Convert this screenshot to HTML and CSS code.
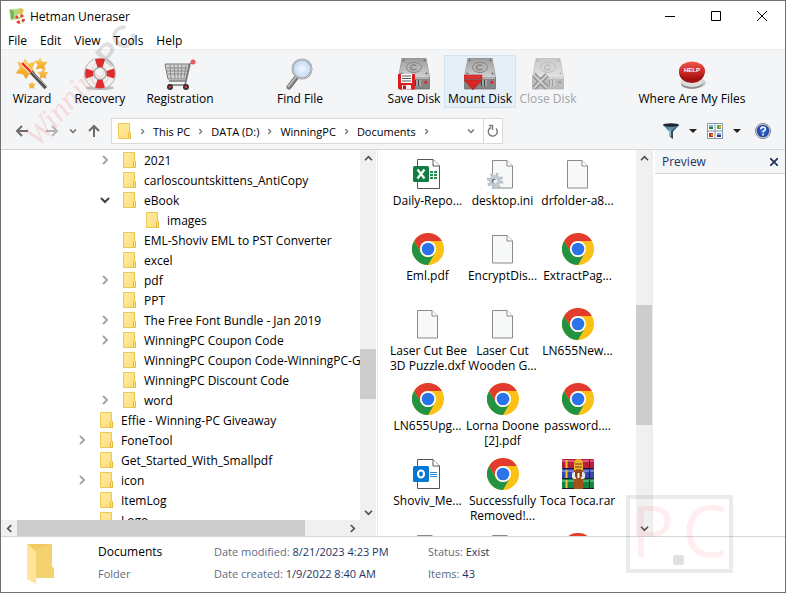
FILE: index.html
```html
<!DOCTYPE html>
<html lang="en">
  <head>
    <meta charset="UTF-8" />
    <meta name="viewport" content="width=device-width, initial-scale=1.0" />
    <title>Hetman Uneraser</title>
    <link rel="stylesheet" href="styles.css">
  </head>
  <body>
    <!-- Shared icons -->
    <svg class="sprite" aria-hidden="true">
      <defs>
        <linearGradient id="g-folder" x1="0" y1="0" x2="1" y2="1">
          <stop offset="0" stop-color="#ffeaa4" />
          <stop offset="1" stop-color="#fbde7a" />
        </linearGradient>
        <linearGradient id="g-metal" x1="0" y1="0" x2="0" y2="1">
          <stop offset="0" stop-color="#9b9b9b" />
          <stop offset="1" stop-color="#d2d2d2" />
        </linearGradient>
        <linearGradient id="g-star" x1="0" y1="0" x2="0" y2="1">
          <stop offset="0" stop-color="#ffd84a" />
          <stop offset="1" stop-color="#f59a1b" />
        </linearGradient>
        <linearGradient id="g-red" x1="0" y1="0" x2="0" y2="1">
          <stop offset="0" stop-color="#f4554b" />
          <stop offset="1" stop-color="#a80d0d" />
        </linearGradient>
        <radialGradient id="g-help">
          <stop offset="0" stop-color="#3f7ae0" />
          <stop offset="1" stop-color="#1a3f9c" />
        </radialGradient>
        <radialGradient id="g-lens">
          <stop offset="0" stop-color="#f1f8ff" />
          <stop offset="1" stop-color="#bcd8f6" />
        </radialGradient>
      </defs>

      <symbol id="folder" viewBox="0 0 14 16">
        <path d="M.5 .5H11.500V15.500H.5Z" fill="url(#g-folder)" stroke="#ecc955" />
        <path d="M11.500 9.500h1v6h-2v-5z" fill="#ffe795" stroke="#e2b93c" />
      </symbol>
      <symbol id="chev-right" viewBox="0 0 8 10">
        <path d="M2 1l4 4-4 4" fill="none" stroke="currentColor" stroke-width="2" />
      </symbol>
      <symbol id="chev-down" viewBox="0 0 10 8">
        <path d="M1 2l4 4 4-4" fill="none" stroke="currentColor" stroke-width="2" />
      </symbol>
      <symbol id="arrow" viewBox="0 0 14 12">
        <path d="M13 6H2M7 1L2 6l5 5" fill="none" stroke="currentColor" stroke-width="2" />
      </symbol>
      <symbol id="drop" viewBox="0 0 8 4">
        <path d="M0 0h8L4 4z" fill="#222" />
      </symbol>

      <symbol id="disk" viewBox="0 0 32 32">
        <path d="M4 0h24l3.500 19.500H.5z" fill="url(#g-metal)" stroke="#8e8e8e" stroke-width=".7" />
        <path d="M.5 19.500h31V31H.5z" fill="#858585" stroke="#6c6c6c" stroke-width=".7" />
        <path d="M1 20h30" stroke="#e2e2e2" />
        <ellipse cx="16" cy="9.500" rx="7.500" ry="5" fill="#b4b4b4" stroke="#858585" />
        <path d="M18.500 7.500c-3-1.500-6 0-6 2s3 3 6 1.500" fill="none" stroke="#808080" stroke-width="1.300" />
        <g fill="#666"><circle cx="5.500" cy="2.500" r=".9" /><circle cx="26.500" cy="2.500" r=".9" /><circle cx="3.500" cy="15.500" r="1" /><circle cx="28.500" cy="15.500" r="1" /></g>
        <path d="M17.500 22v6M20.500 22v6" stroke="#444" stroke-width="1.300" />
        <path d="M19 22v6M22 22v6" stroke="#ccc" />
        <path d="M26.500 23h2.500v2.500h-2.500z" fill="#f01818" />
      </symbol>

      <symbol id="page" viewBox="0 0 32 32">
        <path d="M5.500 2.500H20l5.500 5.500v22h-20z" fill="#f7f8f8" stroke="#8a8a8a" />
        <path d="M20 2.500V8h5.500" fill="#fff" stroke="#8a8a8a" />
      </symbol>

      <symbol id="chrome" viewBox="0 0 48 48">
        <circle cx="24" cy="24" r="24" fill="#fbc116" />
        <path d="M3.200 12A24 24 0 0 1 44.800 12H24A12 12 0 0 0 13.600 30Z" fill="#e33b2e" />
        <path d="M3.200 12A24 24 0 0 0 24 48L34.400 30A12 12 0 0 1 13.600 30Z" fill="#229342" />
        <circle cx="24" cy="24" r="12" fill="#fff" />
        <circle cx="24" cy="24" r="9.500" fill="#2b73e8" />
      </symbol>

      <symbol id="excel" viewBox="0 0 32 32">
        <path d="M5.500 1.500H21L27.500 8v22.500h-22z" fill="#fff" stroke="#555" />
        <path d="M21 1.500V8h6.500" fill="#fff" stroke="#555" />
        <path d="M18 13h3v2h-3zm4 0h3v2h-3zm-4 3h3v2h-3zm4 0h3v2h-3zm-4 3h3v2h-3zm4 0h3v2h-3z" fill="#1f8a4c" />
        <rect x="1" y="8" width="16" height="16" rx="1.500" fill="#107c41" />
        <path d="M5.500 11.500l7 9M12.500 11.500l-7 9" stroke="#fff" stroke-width="2.200" />
      </symbol>

      <symbol id="outlook" viewBox="0 0 32 32">
        <path d="M5.500 1.500H21L27.500 8v22.500h-22z" fill="#fff" stroke="#555" />
        <path d="M21 1.500V8h6.500" fill="#fff" stroke="#555" />
        <path d="M18 14.500h7M18 16.500h7M18 18.500h7" stroke="#2a86d6" />
        <rect x="1" y="8" width="16" height="16" rx="1.500" fill="#0078d4" />
        <ellipse cx="9" cy="16" rx="3" ry="3.500" fill="none" stroke="#fff" stroke-width="2.200" />
      </symbol>

      <symbol id="ini" viewBox="0 0 32 32">
        <path d="M5.500 2.500H20l5.500 5.500v22h-20z" fill="#f7f8f8" stroke="#8a8a8a" />
        <path d="M20 2.500V8h5.500" fill="#fff" stroke="#8a8a8a" />
        <circle cx="8" cy="23" r="6.500" fill="none" stroke="#b4c0ca" stroke-width="3.500" stroke-dasharray="2.550 2.550" />
        <circle cx="8" cy="23" r="4.200" fill="#e8edf1" stroke="#c0cad2" stroke-width="3.500" />
        <circle cx="7" cy="23" r="2.200" fill="#66727c" />
        <circle cx="8" cy="23.500" r="1.800" fill="#f4f6f8" />
      </symbol>

      <symbol id="rar" viewBox="0 0 32 32">
        <rect y="1" width="32" height="10" rx="1" fill="#b81d3c" />
        <rect y="11" width="32" height="10" rx="1" fill="#3547a8" />
        <rect y="21" width="32" height="10" rx="1" fill="#168246" />
        <path d="M0 3h32" stroke="#e0577a" stroke-width="2" />
        <path d="M0 13h32" stroke="#6d83d8" stroke-width="2" />
        <path d="M0 23h32" stroke="#43b870" stroke-width="2" />
        <path d="M0 10.500h32M0 20.500h32M0 30.500h32" stroke="#201a38" />
        <path d="M4.500 2v8M4.500 12v8M4.500 22v8" stroke="#f0c43c" stroke-width="2" />
        <path d="M27.500 2v8M27.500 12v8M27.500 22v8" stroke="#222" />
        <path d="M12 31V5q0-4 4-4t5 4v26z" fill="#a4521a" />
        <path d="M12 12V6q0-5 4.500-5T21 6v6z" fill="#f2b234" />
        <path d="M13 6h7M13 9h7M14 12h5" stroke="#75400e" />
        <rect x="10" y="14" width="13" height="7" rx="2" fill="#e7e7e7" />
        <path d="M13 14h7v4l-1.500 3h-4L13 18z" fill="#8f4112" />
        <path d="M16.500 15v5" stroke="#fff" stroke-width="2" />
      </symbol>
    </svg>

    <div class="window">
      <header class="titlebar">
        <svg class="app-icon" viewBox="0 0 16 16">
          <path d="M0 2l6-1 7-1 1 7-3 4-9 1z" fill="#b7d98b" />
          <path d="M1 1l4 2v7l-3 2z" fill="#79b652" />
          <path d="M8 4l4-4 3 2-2 4z" fill="#e6c34c" />
          <circle cx="11" cy="11" r="3.500" fill="none" stroke="#f5eee9" stroke-width="3" />
          <circle cx="11" cy="11" r="3.500" fill="none" stroke="#d9472b" stroke-width="3" stroke-dasharray="2.750 2.750" />
        </svg>
        <h1 class="app-title">Hetman Uneraser</h1>
        <div class="window-buttons">
          <button class="win-btn" aria-label="Minimize"><svg viewBox="0 0 10 10"><path d="M0 5.500h10" stroke="#000" /></svg></button>
          <button class="win-btn" aria-label="Maximize"><svg viewBox="0 0 10 10"><path d="M.5 .5h9v9h-9z" fill="none" stroke="#000" /></svg></button>
          <button class="win-btn" aria-label="Close"><svg viewBox="0 0 10 10"><path d="M0 0l10 10M10 0L0 10" stroke="#000" /></svg></button>
        </div>
      </header>

      <nav class="menu">
        <button class="menu-item">File</button>
        <button class="menu-item">Edit</button>
        <button class="menu-item">View</button>
        <button class="menu-item">Tools</button>
        <button class="menu-item">Help</button>
      </nav>

      <div class="toolbar">
        <div class="tool-group spaced">
          <button class="tool small">
            <svg viewBox="0 0 32 32">
              <g fill="url(#g-star)" stroke="#f0a030" stroke-width=".4">
                <path d="M9 1l3 5 7-2-3 6 3 5-6 1-3 5-3-5-7-1 4-5-2-6 5 2z" />
                <path d="M24 0l2 4 5 0-3 4 1 4-4-2-5 1 2-4-3-4 4 0z" />
                <path d="M27 11l1.500 3 3.500.5-2.500 2.500.5 3.500-3-1.500-3 1.500.5-3.500-2.500-2.500 3.500-.5z" />
                <path d="M16 24l1 2 2.500.5-2 1.500.5 2.500-2-1-2.500 1 .5-2.500-1.500-2 2.500 0z" />
              </g>
              <path d="M14.500 13.500L30 30" stroke="#555" stroke-width="4" />
              <path d="M15 13L31 29" stroke="#aaa" stroke-width="1" />
              <path d="M6 5l9 9" stroke="#fff" stroke-width="4" />
              <path d="M6 5l9 9" stroke="#ec3b2c" stroke-width="2.500" />
            </svg>
            Wizard
          </button>
          <button class="tool">
            <svg viewBox="0 0 32 32">
              <ellipse cx="16" cy="30" rx="14" ry="2" fill="#bbb" />
              <circle cx="16" cy="15.500" r="11" fill="none" stroke="#bcbcbc" stroke-width="10" />
              <circle cx="16" cy="15.500" r="11" fill="none" stroke="#f2f2f2" stroke-width="8" />
              <path d="M11 1.500a15 15 0 0 1 10 0l-2.500 8a7 7 0 0 0-5 0zM11 29.500a15 15 0 0 0 10 0l-2.500-8a7 7 0 0 1-5 0zM2 10.500a15 15 0 0 0 0 10l7.500-2.500a7 7 0 0 1 0-5zM30 10.500a15 15 0 0 1 0 10L22.500 18a7 7 0 0 0 0-5z" fill="#dd2c2c" />
              <circle cx="16" cy="15.500" r="6" fill="none" stroke="#999" />
            </svg>
            Recovery
          </button>
          <button class="tool large">
            <svg viewBox="0 0 32 32">
              <path d="M1 6h24l-3 15H4z" fill="#d4d4d4" stroke="#777" />
              <path d="M3 10h20M3 13h20M4 16h18M6 7l1 13M10 7l1 13M14 7v13M18 7l-1 13M22 7l-2 13" stroke="#888" fill="none" />
              <path d="M29 4l-3 2-4 17-1 4H4M5 23h17" fill="none" stroke="#777" stroke-width="1.500" />
              <circle cx="29" cy="4" r="2.500" fill="#e85b5b" />
              <circle cx="6" cy="29" r="3" fill="#333" /><circle cx="6" cy="29" r="1.300" fill="#e33" />
              <circle cx="22" cy="29" r="3" fill="#333" /><circle cx="22" cy="29" r="1.300" fill="#e33" />
            </svg>
            Registration
          </button>
        </div>
        <div class="tool-group">
          <button class="tool">
            <svg viewBox="0 0 32 32">
              <path d="M12 20L5 29" stroke="#777" stroke-width="5" stroke-linecap="round" />
              <path d="M12 19L4 29" stroke="#c8c8c8" stroke-width="1.500" />
              <circle cx="18" cy="11" r="9.500" fill="url(#g-lens)" stroke="#999" stroke-width="2" />
              <circle cx="18" cy="11" r="9.500" fill="none" stroke="#d8d8d8" stroke-width=".8" />
            </svg>
            Find File
          </button>
        </div>
        <div class="tool-group">
          <button class="tool">
            <svg viewBox="0 0 32 32">
              <use href="#disk" />
              <path d="M0 16h17v15.500H2L0 29.500z" fill="#d81e1e" />
              <path d="M3 16h11v9H3z" fill="#fff" />
              <path d="M4 18h9M4 20.500h9M4 23h9" stroke="#555" />
              <path d="M4 27h9v4.500H4z" fill="#eee" /><path d="M5 27.500h3V31H5z" fill="#c11" />
            </svg>
            Save Disk
          </button>
          <button class="tool large hover">
            <svg viewBox="0 0 32 32">
              <use href="#disk" />
              <path d="M0 17h18v4H0z" fill="#e03434" stroke="#a81818" stroke-width=".5" />
              <path d="M0 22h18l-9 10z" fill="#d42727" stroke="#a81818" stroke-width=".5" />
            </svg>
            Mount Disk
          </button>
          <button class="tool medium" disabled>
            <svg viewBox="0 0 32 32">
              <use href="#disk" />
              <path d="M2 17l13 13M15 17L2 30" stroke="#333" stroke-width="5" />
              <path d="M2 17l13 13M15 17L2 30" stroke="#aaa" stroke-width="2" />
            </svg>
            Close Disk
          </button>
        </div>
        <div class="tool-group">
          <button class="tool wide">
            <svg viewBox="0 0 32 32">
              <ellipse cx="18" cy="25" rx="12" ry="5" fill="#c9ccd0" />
              <ellipse cx="16" cy="26" rx="11" ry="5" fill="#8f8f8f" />
              <ellipse cx="16" cy="24" rx="11" ry="5" fill="#ddd" />
              <path d="M3 13q0 11 13 12 12-1 13-12z" fill="#9d1212" />
              <ellipse cx="16" cy="12.500" rx="13" ry="9" fill="url(#g-red)" />
              <text class="help-word" x="8" y="14">HELP</text>
            </svg>
            Where Are My Files
          </button>
        </div>
      </div>

      <div class="navbar">
        <div class="history">
          <button class="icon-btn" aria-label="Back"><svg class="i-arrow" viewBox="0 0 14 12"><use href="#arrow" /></svg></button>
          <button class="icon-btn forward" aria-label="Forward"><svg class="i-arrow flip" viewBox="0 0 14 12"><use href="#arrow" /></svg></button>
          <button class="icon-btn" aria-label="Recent locations"><svg class="i-small" viewBox="0 0 10 8"><use href="#chev-down" /></svg></button>
          <button class="icon-btn" aria-label="Up"><svg class="i-arrow up" viewBox="0 0 14 12"><use href="#arrow" /></svg></button>
        </div>
        <div class="address">
          <svg class="i-folder" viewBox="0 0 14 16"><use href="#folder" /></svg>
          <svg class="i-crumb" viewBox="0 0 8 10"><use href="#chev-right" /></svg>
          <a class="crumb" href="#">This PC</a>
          <svg class="i-crumb" viewBox="0 0 8 10"><use href="#chev-right" /></svg>
          <a class="crumb" href="#">DATA (D:)</a>
          <svg class="i-crumb" viewBox="0 0 8 10"><use href="#chev-right" /></svg>
          <a class="crumb" href="#">WinningPC</a>
          <svg class="i-crumb" viewBox="0 0 8 10"><use href="#chev-right" /></svg>
          <a class="crumb" href="#">Documents</a>
          <svg class="i-crumb" viewBox="0 0 8 10"><use href="#chev-right" /></svg>
          <button class="icon-btn history-drop" aria-label="Previous locations"><svg class="i-small" viewBox="0 0 10 8"><use href="#chev-down" /></svg></button>
          <button class="icon-btn refresh" aria-label="Refresh">
            <svg class="i-refresh" viewBox="0 0 12 14"><path d="M4 3.500A4.500 4.500 0 1 0 9 4.500M2 1.500h3.500V6" fill="none" stroke="#777" stroke-width="1.400" /></svg>
          </button>
        </div>
        <div class="view-tools">
          <button class="icon-btn" aria-label="Filter">
            <svg class="i-16" viewBox="0 0 16 16">
              <path d="M0 2l6 6.500V13l4 3V8.500L16 2z" fill="#5c8fae" />
              <path d="M8 8v6.500l2 1.500V8.500L16 2z" fill="#33505f" />
              <ellipse cx="8" cy="2" rx="8" ry="1.800" fill="#1e2a30" />
              <path d="M7 7v6" stroke="#cfe6f2" />
            </svg>
          </button>
          <button class="icon-btn" aria-label="Filter options"><svg class="i-drop" viewBox="0 0 8 4"><use href="#drop" /></svg></button>
          <button class="icon-btn" aria-label="View">
            <svg class="i-16" viewBox="0 0 16 16">
              <path d="M.5 .5h15v15H.5z" fill="#fff" stroke="#8795aa" />
              <path d="M8 1v14M1 8h14" stroke="#8795aa" />
              <path d="M2 2h4v3H2z" fill="#7fb6e0" /><path d="M2 4h4v2H2z" fill="#31803f" />
              <path d="M10 2h4v4h-4z" fill="#58a83b" /><path d="M12 3h2v2h-2z" fill="#f0b42d" />
              <path d="M2 10h4v4H2z" fill="#b23518" /><path d="M4 11h2v2H4z" fill="#f08928" />
              <path d="M10 10h4v4h-4z" fill="#7fa8dc" /><path d="M10 12h4v2h-4z" fill="#22447c" />
            </svg>
          </button>
          <button class="icon-btn" aria-label="View options"><svg class="i-drop" viewBox="0 0 8 4"><use href="#drop" /></svg></button>
          <button class="icon-btn help" aria-label="Help">
            <svg class="i-16" viewBox="0 0 16 16">
              <circle cx="8" cy="8" r="7.500" fill="#d7dbe2" stroke="#7c7f87" />
              <circle cx="8" cy="8" r="6.200" fill="url(#g-help)" />
              <path d="M5.800 6.300q0-2.300 2.300-2.300t2.200 2q0 1.200-1.200 1.800Q8 8.300 8 9.500M8 10.800v1.600" fill="none" stroke="#fff" stroke-width="1.600" />
            </svg>
          </button>
        </div>
      </div>

      <main class="panes">
        <section class="tree-pane">
          <ul class="tree">
            <li class="node"><button class="toggle" aria-label="Expand"><svg class="i-tree" viewBox="0 0 8 10"><use href="#chev-right" /></svg></button><svg class="i-folder" viewBox="0 0 14 16"><use href="#folder" /></svg>2021</li>
            <li class="node"><span class="toggle"></span><svg class="i-folder" viewBox="0 0 14 16"><use href="#folder" /></svg>carloscountskittens_AntiCopy</li>
            <li class="node"><button class="toggle open" aria-label="Collapse"><svg class="i-open" viewBox="0 0 10 8"><use href="#chev-down" /></svg></button><svg class="i-folder" viewBox="0 0 14 16"><use href="#folder" /></svg>eBook</li>
            <li class="node deep"><span class="toggle"></span><svg class="i-folder" viewBox="0 0 14 16"><use href="#folder" /></svg>images</li>
            <li class="node"><span class="toggle"></span><svg class="i-folder" viewBox="0 0 14 16"><use href="#folder" /></svg>EML-Shoviv EML to PST Converter</li>
            <li class="node"><span class="toggle"></span><svg class="i-folder" viewBox="0 0 14 16"><use href="#folder" /></svg>excel</li>
            <li class="node"><button class="toggle" aria-label="Expand"><svg class="i-tree" viewBox="0 0 8 10"><use href="#chev-right" /></svg></button><svg class="i-folder" viewBox="0 0 14 16"><use href="#folder" /></svg>pdf</li>
            <li class="node"><span class="toggle"></span><svg class="i-folder" viewBox="0 0 14 16"><use href="#folder" /></svg>PPT</li>
            <li class="node"><button class="toggle" aria-label="Expand"><svg class="i-tree" viewBox="0 0 8 10"><use href="#chev-right" /></svg></button><svg class="i-folder" viewBox="0 0 14 16"><use href="#folder" /></svg>The Free Font Bundle - Jan 2019</li>
            <li class="node"><button class="toggle" aria-label="Expand"><svg class="i-tree" viewBox="0 0 8 10"><use href="#chev-right" /></svg></button><svg class="i-folder" viewBox="0 0 14 16"><use href="#folder" /></svg>WinningPC Coupon Code</li>
            <li class="node"><span class="toggle"></span><svg class="i-folder" viewBox="0 0 14 16"><use href="#folder" /></svg>WinningPC Coupon Code-WinningPC-G</li>
            <li class="node"><span class="toggle"></span><svg class="i-folder" viewBox="0 0 14 16"><use href="#folder" /></svg>WinningPC Discount Code</li>
            <li class="node"><button class="toggle" aria-label="Expand"><svg class="i-tree" viewBox="0 0 8 10"><use href="#chev-right" /></svg></button><svg class="i-folder" viewBox="0 0 14 16"><use href="#folder" /></svg>word</li>
            <li class="node top"><span class="toggle"></span><svg class="i-folder" viewBox="0 0 14 16"><use href="#folder" /></svg>Effie - Winning-PC Giveaway</li>
            <li class="node top"><button class="toggle" aria-label="Expand"><svg class="i-tree" viewBox="0 0 8 10"><use href="#chev-right" /></svg></button><svg class="i-folder" viewBox="0 0 14 16"><use href="#folder" /></svg>FoneTool</li>
            <li class="node top"><span class="toggle"></span><svg class="i-folder" viewBox="0 0 14 16"><use href="#folder" /></svg>Get_Started_With_Smallpdf</li>
            <li class="node top"><button class="toggle" aria-label="Expand"><svg class="i-tree" viewBox="0 0 8 10"><use href="#chev-right" /></svg></button><svg class="i-folder" viewBox="0 0 14 16"><use href="#folder" /></svg>icon</li>
            <li class="node top"><span class="toggle"></span><svg class="i-folder" viewBox="0 0 14 16"><use href="#folder" /></svg>ItemLog</li>
            <li class="node top"><span class="toggle"></span><svg class="i-folder" viewBox="0 0 14 16"><use href="#folder" /></svg>Logo</li>
          </ul>
          <div class="scroll vertical">
            <button class="scroll-btn" aria-label="Scroll up"><svg class="i-scroll flip-y" viewBox="0 0 10 8"><use href="#chev-down" /></svg></button>
            <div class="track tree-track"><div class="thumb"></div></div>
            <button class="scroll-btn" aria-label="Scroll down"><svg class="i-scroll" viewBox="0 0 10 8"><use href="#chev-down" /></svg></button>
          </div>
          <div class="scroll horizontal">
            <button class="scroll-btn" aria-label="Scroll left"><svg class="i-scroll-x flip" viewBox="0 0 8 10"><use href="#chev-right" /></svg></button>
            <div class="track"><div class="thumb"></div></div>
            <button class="scroll-btn" aria-label="Scroll right"><svg class="i-scroll-x" viewBox="0 0 8 10"><use href="#chev-right" /></svg></button>
          </div>
          <div class="corner"></div>
        </section>

        <section class="files-pane">
          <ul class="files">
            <li class="file"><svg viewBox="0 0 32 32"><use href="#excel" /></svg>Daily-Repo...</li>
            <li class="file"><svg viewBox="0 0 32 32"><use href="#ini" /></svg>desktop.ini</li>
            <li class="file"><svg viewBox="0 0 32 32"><use href="#page" /></svg>drfolder-a8...</li>
            <li class="file"><svg viewBox="0 0 48 48"><use href="#chrome" /></svg>Eml.pdf</li>
            <li class="file"><svg viewBox="0 0 32 32"><use href="#page" /></svg>EncryptDis...</li>
            <li class="file"><svg viewBox="0 0 48 48"><use href="#chrome" /></svg>ExtractPag...</li>
            <li class="file"><svg viewBox="0 0 32 32"><use href="#page" /></svg>Laser Cut Bee<br>3D Puzzle.dxf</li>
            <li class="file"><svg viewBox="0 0 32 32"><use href="#page" /></svg>Laser Cut<br>Wooden G...</li>
            <li class="file"><svg viewBox="0 0 48 48"><use href="#chrome" /></svg>LN655New...</li>
            <li class="file"><svg viewBox="0 0 48 48"><use href="#chrome" /></svg>LN655Upg...</li>
            <li class="file"><svg viewBox="0 0 48 48"><use href="#chrome" /></svg>Lorna Doone<br>[2].pdf</li>
            <li class="file"><svg viewBox="0 0 48 48"><use href="#chrome" /></svg>password....</li>
            <li class="file"><svg viewBox="0 0 32 32"><use href="#outlook" /></svg>Shoviv_Me...</li>
            <li class="file"><svg viewBox="0 0 48 48"><use href="#chrome" /></svg>Successfully<br>Removed!...</li>
            <li class="file"><svg viewBox="0 0 32 32"><use href="#rar" /></svg>Toca Toca.rar</li>
            <li class="file"><svg viewBox="0 0 32 32"><use href="#page" /></svg></li>
            <li class="file"><svg viewBox="0 0 32 32"><use href="#page" /></svg></li>
            <li class="file"><svg viewBox="0 0 48 48"><use href="#chrome" /></svg></li>
          </ul>
          <div class="scroll vertical">
            <button class="scroll-btn" aria-label="Scroll up"><svg class="i-scroll flip-y" viewBox="0 0 10 8"><use href="#chev-down" /></svg></button>
            <div class="track files-track"><div class="thumb"></div></div>
            <button class="scroll-btn" aria-label="Scroll down"><svg class="i-scroll" viewBox="0 0 10 8"><use href="#chev-down" /></svg></button>
          </div>
        </section>

        <aside class="preview">
          <div class="preview-head">
            <h2 class="preview-title">Preview</h2>
            <button class="icon-btn" aria-label="Close preview"><svg class="i-close" viewBox="0 0 8 8"><path d="M0 0l8 8M8 0L0 8" stroke="#1e2f5c" stroke-width="1.700" /></svg></button>
          </div>
        </aside>
      </main>

      <footer class="details">
        <svg class="big-folder" viewBox="0 0 28 42">
          <path d="M0 1h25v22l2 3v9H9z" fill="#f0cb62" />
          <path d="M9 6L25 1v22l2 3v9H9z" fill="#f3d272" />
          <path d="M0 1l9 7v33L0 36z" fill="#ffe49a" />
        </svg>
        <div class="detail-col name-col">
          <span class="detail-name">Documents</span>
          <span class="detail-label">Folder</span>
        </div>
        <div class="detail-col date-col">
          <span><span class="detail-label">Date modified:</span> 8/21/2023 4:23 PM</span>
          <span><span class="detail-label">Date created:</span> 1/9/2022 8:40 AM</span>
        </div>
        <div class="detail-col">
          <span><span class="detail-label">Status:</span> Exist</span>
          <span><span class="detail-label">Items:</span> 43</span>
        </div>
      </footer>

      <!-- Watermarks over the window -->
      <div class="mark-script"><span class="mark-word">Winning</span><span class="mark-pc">PC</span></div>
      <div class="mark-box">
        <svg viewBox="0 0 107 78">
          <path d="M2 2h103v74H2z" fill="none" stroke="#000" stroke-opacity=".08" stroke-width="4" />
          <text class="mark-letter" x="5" y="62">P</text>
          <text class="mark-letter" x="56" y="62">C</text>
          <rect x="47" y="60" width="11" height="10" rx="2" fill="#000" fill-opacity=".12" />
        </svg>
      </div>
    </div>
  </body>
</html>
```
FILE: styles.css
```css
* {
  box-sizing: border-box;
}

body {
  margin: 0;
  font-family: "Open Sans", "Noto Sans", sans-serif;
  font-size: 12px;
  line-height: 15px;
  color: #000;
}

button {
  border: 0;
  padding: 0;
  background: none;
  font: inherit;
  color: inherit;
}

ul {
  margin: 0;
  padding: 0;
  list-style: none;
}

svg {
  flex: none;
}

.sprite {
  position: absolute;
  width: 0;
  height: 0;
}

.window {
  position: relative;
  display: flex;
  flex-direction: column;
  height: 100vh;
  border: 1px solid #6f6f6f;
  background: #fff;
  overflow: hidden;
}

/* Title bar */
.titlebar {
  display: flex;
  align-items: center;
  height: 30px;
  padding-left: 8px;
}

.app-icon {
  width: 16px;
  height: 16px;
}

.app-title {
  margin: 0 auto 0 5px;
  font-size: 12px;
  font-weight: normal;
}

.window-buttons {
  display: flex;
}

.win-btn {
  width: 46px;
  height: 28px;
}

.win-btn svg {
  width: 10px;
  height: 10px;
}

/* Menu */
.menu {
  display: flex;
  gap: 13px;
  height: 18px;
  padding: 0 7px;
}

/* Toolbar */
.toolbar {
  display: flex;
  gap: 54px;
  padding: 5px 7px 4px;
  background: #f4f5f7;
  border-top: 1px solid #ececec;
}

.tool-group {
  display: flex;
}

.tool-group.spaced {
  gap: 14px;
}

.tool {
  display: flex;
  flex-direction: column;
  align-items: center;
  gap: 1px;
  width: 60px;
  height: 53px;
  padding-top: 2px;
  border: 1px solid transparent;
  white-space: nowrap;
}

.tool svg {
  width: 32px;
  height: 32px;
}

.tool.small {
  width: 48px;
}

.tool.medium {
  width: 64px;
}

.tool.large {
  width: 72px;
}

.tool.wide {
  width: 116px;
}

.tool.hover {
  background: #e5eff8;
  border: 1px dotted #bcd9f2;
}

.tool:disabled {
  color: #a3a5a8;
}

.tool:disabled svg {
  filter: grayscale(1);
  opacity: 0.5;
}

.help-word {
  font-family: "Liberation Sans", sans-serif;
  font-size: 6px;
  font-weight: bold;
  fill: #fff;
}

/* Navigation row */
.navbar {
  display: flex;
  align-items: center;
  padding: 6px 14px 5px;
  background: #f4f5f7;
  border-bottom: 1px solid #d5d6d9;
}

.icon-btn {
  display: flex;
  align-items: center;
  justify-content: center;
}

.history {
  display: flex;
  align-items: center;
  gap: 10px;
  width: 96px;
  color: #6b6b6b;
}

.history .forward {
  margin-left: 6px;
  color: #b5b5b5;
}

.i-arrow {
  width: 14px;
  height: 12px;
}

.flip {
  transform: scaleX(-1);
}

.flip-y {
  transform: scaleY(-1);
}

.up {
  transform: rotate(90deg);
}

.i-small {
  width: 8px;
  height: 6px;
}

.i-folder {
  width: 14px;
  height: 16px;
}

.i-crumb {
  width: 5px;
  height: 7px;
  color: #777;
}

.address {
  display: flex;
  align-items: center;
  gap: 8px;
  width: 392px;
  height: 26px;
  padding-left: 6px;
  background: #fff;
  border: 1px solid #d9d9d9;
  font-size: 11px;
  white-space: nowrap;
}

.crumb {
  color: #000;
  text-decoration: none;
}

.history-drop {
  margin-left: auto;
  color: #777;
}

.refresh {
  width: 19px;
  height: 100%;
  border-left: 1px solid #d9d9d9;
}

.i-refresh {
  width: 12px;
  height: 14px;
}

.view-tools {
  display: flex;
  align-items: center;
  gap: 10px;
  margin-left: auto;
}

.i-16 {
  width: 16px;
  height: 16px;
}

.i-drop {
  width: 8px;
  height: 4px;
}

.view-tools .help {
  margin-left: 4px;
}

/* Main panes */
.panes {
  display: grid;
  grid-template-columns: 376px 1fr 132px;
  flex: 1;
  min-height: 0;
}

.tree-pane {
  display: grid;
  grid-template-columns: 1fr 16px;
  grid-template-rows: 1fr 16px;
  min-height: 0;
  border-right: 1px solid #fff;
}

.tree {
  min-height: 0;
  overflow: hidden;
  white-space: nowrap;
}

.node {
  display: flex;
  align-items: center;
  height: 20px;
  padding-left: 92px;
}

.node .i-folder {
  margin-right: 7px;
}

.node.top {
  padding-left: 69px;
}

.node.deep {
  padding-left: 115px;
}

.toggle {
  display: flex;
  flex: none;
  align-items: center;
  justify-content: center;
  width: 24px;
  margin-right: 6px;
  color: #a6a6a6;
}

.toggle.open {
  color: #404040;
}

.i-tree {
  width: 8px;
  height: 10px;
}

.i-open {
  width: 10px;
  height: 8px;
}

/* Scroll bars */
.scroll {
  display: flex;
  background: #f0f0f0;
}

.vertical {
  flex-direction: column;
  width: 16px;
}

.scroll-btn {
  display: flex;
  align-items: center;
  justify-content: center;
  width: 16px;
  height: 16px;
  color: #505050;
}

.i-scroll {
  width: 9px;
  height: 7px;
}

.i-scroll-x {
  width: 7px;
  height: 9px;
}

.track {
  display: flex;
  flex: 1;
}

.vertical .track {
  flex-direction: column;
}

.thumb {
  background: #cdcdcd;
}

.tree-track {
  padding-top: 183px;
}

.tree-track .thumb {
  height: 50px;
}

.horizontal .thumb {
  width: 88%;
}

.files-track {
  padding-top: 139px;
}

.files-track .thumb {
  height: 120px;
}

.corner {
  background: #f0f0f0;
}

/* File icons */
.files-pane {
  display: flex;
  min-height: 0;
  border-left: 1px solid #ececec;
  border-right: 1px solid #ececec;
}

.files {
  display: grid;
  grid-template-columns: repeat(auto-fill, 75px);
  grid-auto-rows: 75px;
  flex: 1;
  padding-left: 12px;
  overflow: hidden;
}

.file {
  display: block;
  padding-top: 8px;
  text-align: center;
  white-space: nowrap;
}

.file svg {
  display: block;
  width: 32px;
  height: 32px;
  margin: 0 auto 3px;
}

/* Preview */
.preview-head {
  display: flex;
  align-items: center;
  justify-content: space-between;
  height: 24px;
  margin-left: 2px;
  padding: 0 7px;
  background: #f4f5f7;
  border-bottom: 1px solid #d9dadd;
}

.preview-title {
  margin: 0;
  font-size: 12px;
  font-weight: normal;
  color: #1e3464;
}

.i-close {
  width: 8px;
  height: 8px;
}

/* Details */
.details {
  display: flex;
  align-items: flex-start;
  height: 56px;
  padding: 6px 26px;
  border-top: 1px solid #d5d6d9;
  font-size: 11px;
  color: #1e3464;
}

.big-folder {
  width: 28px;
  height: 42px;
  margin-right: 43px;
}

.detail-col {
  display: flex;
  flex-direction: column;
  gap: 7px;
  padding-top: 1px;
}

.name-col {
  width: 116px;
}

.date-col {
  width: 214px;
}

.detail-name {
  font-size: 12px;
  color: #000;
}

.detail-label {
  color: #5c6c86;
}

/* Watermarks */
.mark-script {
  position: absolute;
  top: 120px;
  left: 40px;
  display: flex;
  align-items: baseline;
  font-family: "Liberation Serif", serif;
  font-size: 32px;
  line-height: 30px;
  transform: rotate(-48deg);
  transform-origin: 0 100%;
  pointer-events: none;
}

.mark-word {
  font-style: italic;
  color: rgba(240, 80, 80, 0.18);
}

.mark-pc {
  font-family: "Liberation Sans", sans-serif;
  font-weight: bold;
  color: rgba(0, 0, 0, 0.12);
}

.mark-box {
  position: absolute;
  right: 52px;
  bottom: 19px;
  width: 107px;
  height: 78px;
  pointer-events: none;
}

.mark-letter {
  font-family: "Open Sans", sans-serif;
  font-size: 72px;
  fill: #ff2040;
  fill-opacity: 0.08;
}
```
